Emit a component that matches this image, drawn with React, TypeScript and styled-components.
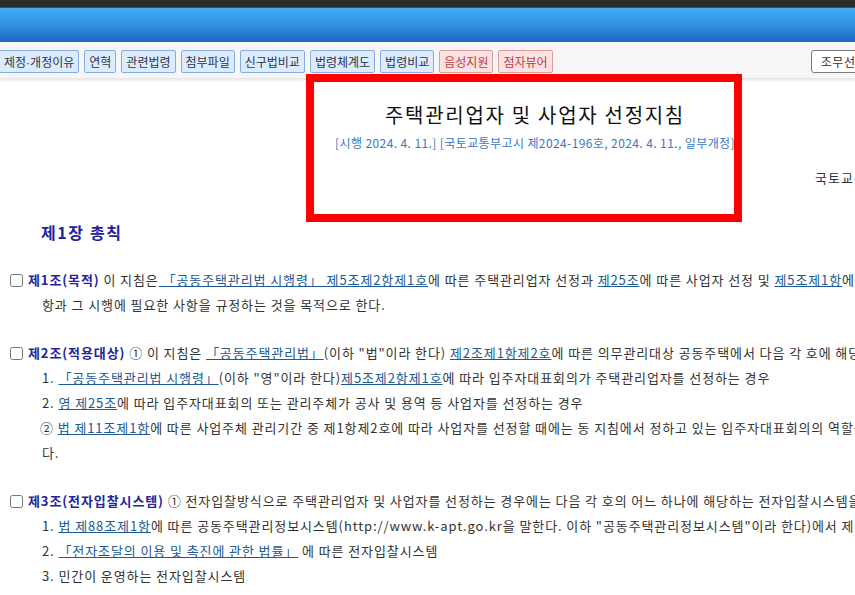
import React from 'react';
import styled, { createGlobalStyle } from 'styled-components';

const GlobalStyle = createGlobalStyle`
  html, body {
    margin: 0;
    padding: 0;
    background: #fff;
    overflow: hidden;
  }
  body {
    font-family: 'Noto Sans CJK KR', 'Noto Sans', sans-serif;
    color: #333;
  }
`;

const Screen = styled.div`
  position: relative;
  width: 855px;
  height: 595px;
  overflow: hidden;
`;

const TopStrip = styled.div`
  height: 7px;
  background: #2c2c2c;
  border-bottom: 1px solid #4a4a4a;
`;

const BlueBar = styled.div`
  height: 34px;
  background: linear-gradient(#42abf7, #2f8ee0 55%, #1d68bd);
`;

const Toolbar = styled.div`
  position: relative;
  z-index: 1;
  height: 36px;
  box-sizing: border-box;
  padding-top: 8px;
  display: flex;
  align-items: flex-start;
  gap: 5px;
  background: #f6f6f6;
  box-shadow: 0 2px 3px rgba(0, 0, 0, 0.12);
  white-space: nowrap;
`;

const ToolButton = styled.button<{ $tone?: 'blue' | 'red' }>`
  height: 23px;
  box-sizing: border-box;
  padding: 0 4px;
  margin: 0;
  font-family: inherit;
  font-size: 12px;
  line-height: 21px;
  border-radius: 2px;
  border: 1px solid ${(p) => (p.$tone === 'red' ? '#e39a9a' : '#86aee6')};
  background: ${(p) => (p.$tone === 'red' ? '#fae2e2' : '#ddecfc')};
  color: ${(p) => (p.$tone === 'red' ? '#c23c3c' : '#2b3450')};
  flex: none;
  &:first-child {
    margin-left: -1px;
  }
`;

const Dot = styled.span`
  font-family: 'Liberation Sans', sans-serif;
`;

const ArticleSelect = styled.div`
  flex: none;
  margin-left: 253px;
  width: 90px;
  height: 23px;
  box-sizing: border-box;
  padding-left: 9px;
  border: 1px solid #7a7a7a;
  border-radius: 3px;
  background: #fff;
  font-size: 12px;
  line-height: 21px;
  letter-spacing: 0.6px;
  color: #333;
`;

/* red annotation frame drawn over the law header */
const Highlight = styled.div`
  position: absolute;
  left: 306px;
  top: 74px;
  width: 436px;
  height: 148px;
  box-sizing: border-box;
  border: 8px solid #ff0000;
  pointer-events: none;
  z-index: 2;
`;

const Document = styled.div`
  width: 1070px;
`;

const LawHeader = styled.div`
  padding-top: 23px;
  text-align: center;
`;

const LawTitle = styled.h2`
  margin: 0;
  font-size: 20px;
  line-height: 28px;
  font-weight: normal;
  letter-spacing: 1.7px;
  color: #111;
`;

const LawMeta = styled.div`
  margin-top: 5px;
  font-size: 12px;
  line-height: 18px;
  letter-spacing: 0.4px;
  color: #3a77c4;
`;

const Ministry = styled.div`
  margin-top: 16px;
  padding-left: 815px;
  font-size: 13px;
  line-height: 20px;
  letter-spacing: 1px;
  color: #333;
  white-space: nowrap;
`;

const Chapter = styled.h3`
  margin: 32px 0 0;
  padding-left: 41px;
  font-size: 16px;
  line-height: 24px;
  font-weight: bold;
  letter-spacing: 1.6px;
  color: #23239c;
`;

const Article = styled.div`
  margin-top: 23px;
`;

const Line = styled.div<{ $indent?: number }>`
  height: 25px;
  line-height: 25px;
  padding-left: ${(p) => p.$indent ?? 10}px;
  white-space: nowrap;
  font-size: 13px;
  letter-spacing: 0.9px;
  color: #333;
`;

const Check = styled.input`
  width: 13px;
  height: 13px;
  margin: 0 5px 0 0;
  vertical-align: -2px;
`;

const ArticleName = styled.strong`
  color: #25259a;
  font-weight: bold;
`;

const Ref = styled.a`
  color: #1b5a93;
  text-decoration: underline;
  cursor: pointer;
`;

const buttons: { label: React.ReactNode; key: string; tone?: 'red' }[] = [
  { key: 'reason', label: <>제정<Dot>·</Dot>개정이유</> },
  { key: 'history', label: '연혁' },
  { key: 'related', label: '관련법령' },
  { key: 'attach', label: '첨부파일' },
  { key: 'compare-old', label: '신구법비교' },
  { key: 'tree', label: '법령체계도' },
  { key: 'compare', label: '법령비교' },
  { key: 'voice', label: '음성지원', tone: 'red' },
  { key: 'braille', label: '점자뷰어', tone: 'red' },
];

export default function App() {
  return (
    <Screen>
      <GlobalStyle />
      <TopStrip />
      <BlueBar />
      <Toolbar>
        {buttons.map((b) => (
          <ToolButton key={b.key} $tone={b.tone ?? 'blue'}>
            {b.label}
          </ToolButton>
        ))}
        <ArticleSelect>조무선택 ▾</ArticleSelect>
      </Toolbar>
      <Highlight />

      <Document>
        <LawHeader>
          <LawTitle>주택관리업자 및 사업자 선정지침</LawTitle>
          <LawMeta>[시행 2024. 4. 11.] [국토교통부고시 제2024-196호, 2024. 4. 11., 일부개정]</LawMeta>
        </LawHeader>
        <Ministry>국토교통부(주택건설공급과), 044-201-3369</Ministry>

        <Chapter>제1장 총칙</Chapter>

        <Article>
          <Line>
            <Check type="checkbox" />
            <ArticleName>제1조(목적)</ArticleName> 이 지침은
            <Ref> 「공동주택관리법 시행령」 제5조제2항제1호</Ref>에 따른 주택관리업자 선정과 <Ref>제25조</Ref>에 따른
            사업자 선정 및 <Ref>제5조제1항</Ref>에 따른 공동주택관리정보시스템 운영 등에 관하여 위임된 사
          </Line>
          <Line $indent={42}>항과 그 시행에 필요한 사항을 규정하는 것을 목적으로 한다.</Line>
        </Article>

        <Article>
          <Line>
            <Check type="checkbox" />
            <ArticleName>제2조(적용대상)</ArticleName> ① 이 지침은 <Ref>「공동주택관리법」</Ref>(이하 "법"이라 한다){' '}
            <Ref>제2조제1항제2호</Ref>에 따른 의무관리대상 공동주택에서 다음 각 호에 해당하는 경우에 적용한다.
          </Line>
          <Line $indent={42}>
            1. <Ref> 「공동주택관리법 시행령」</Ref>(이하 "영"이라 한다)<Ref>제5조제2항제1호</Ref>에 따라
            입주자대표회의가 주택관리업자를 선정하는 경우
          </Line>
          <Line $indent={42}>
            2. <Ref>영 제25조</Ref>에 따라 입주자대표회의 또는 관리주체가 공사 및 용역 등 사업자를 선정하는 경우
          </Line>
          <Line $indent={40}>
            ② <Ref>법 제11조제1항</Ref>에 따른 사업주체 관리기간 중 제1항제2호에 따라 사업자를 선정할 때에는 동
            지침에서 정하고 있는 입주자대표회의의 역할을 사업주체가 대신한
          </Line>
          <Line $indent={42}>다.</Line>
        </Article>

        <Article>
          <Line>
            <Check type="checkbox" />
            <ArticleName>제3조(전자입찰시스템)</ArticleName> ① 전자입찰방식으로 주택관리업자 및 사업자를 선정하는
            경우에는 다음 각 호의 어느 하나에 해당하는 전자입찰시스템을 이용하여야 한다.
          </Line>
          <Line $indent={42}>
            1. <Ref>법 제88조제1항</Ref>에 따른 공동주택관리정보시스템(http://www.k-apt.go.kr을 말한다. 이하
            "공동주택관리정보시스템"이라 한다)에서 제공하는 전자입찰시스템
          </Line>
          <Line $indent={42}>
            2. <Ref> 「전자조달의 이용 및 촉진에 관한 법률」</Ref> 에 따른 전자입찰시스템
          </Line>
          <Line $indent={42}>3. 민간이 운영하는 전자입찰시스템</Line>
          <Line $indent={42}>
            4. <Ref>「전자서명법」</Ref>에 따른 공인전자서명을 이용하는 전자입찰시스템(계약자 및 계약금액은
            공동주택관리정보시스템에 입력하여야 한다)
          </Line>
        </Article>
      </Document>
    </Screen>
  );
}
